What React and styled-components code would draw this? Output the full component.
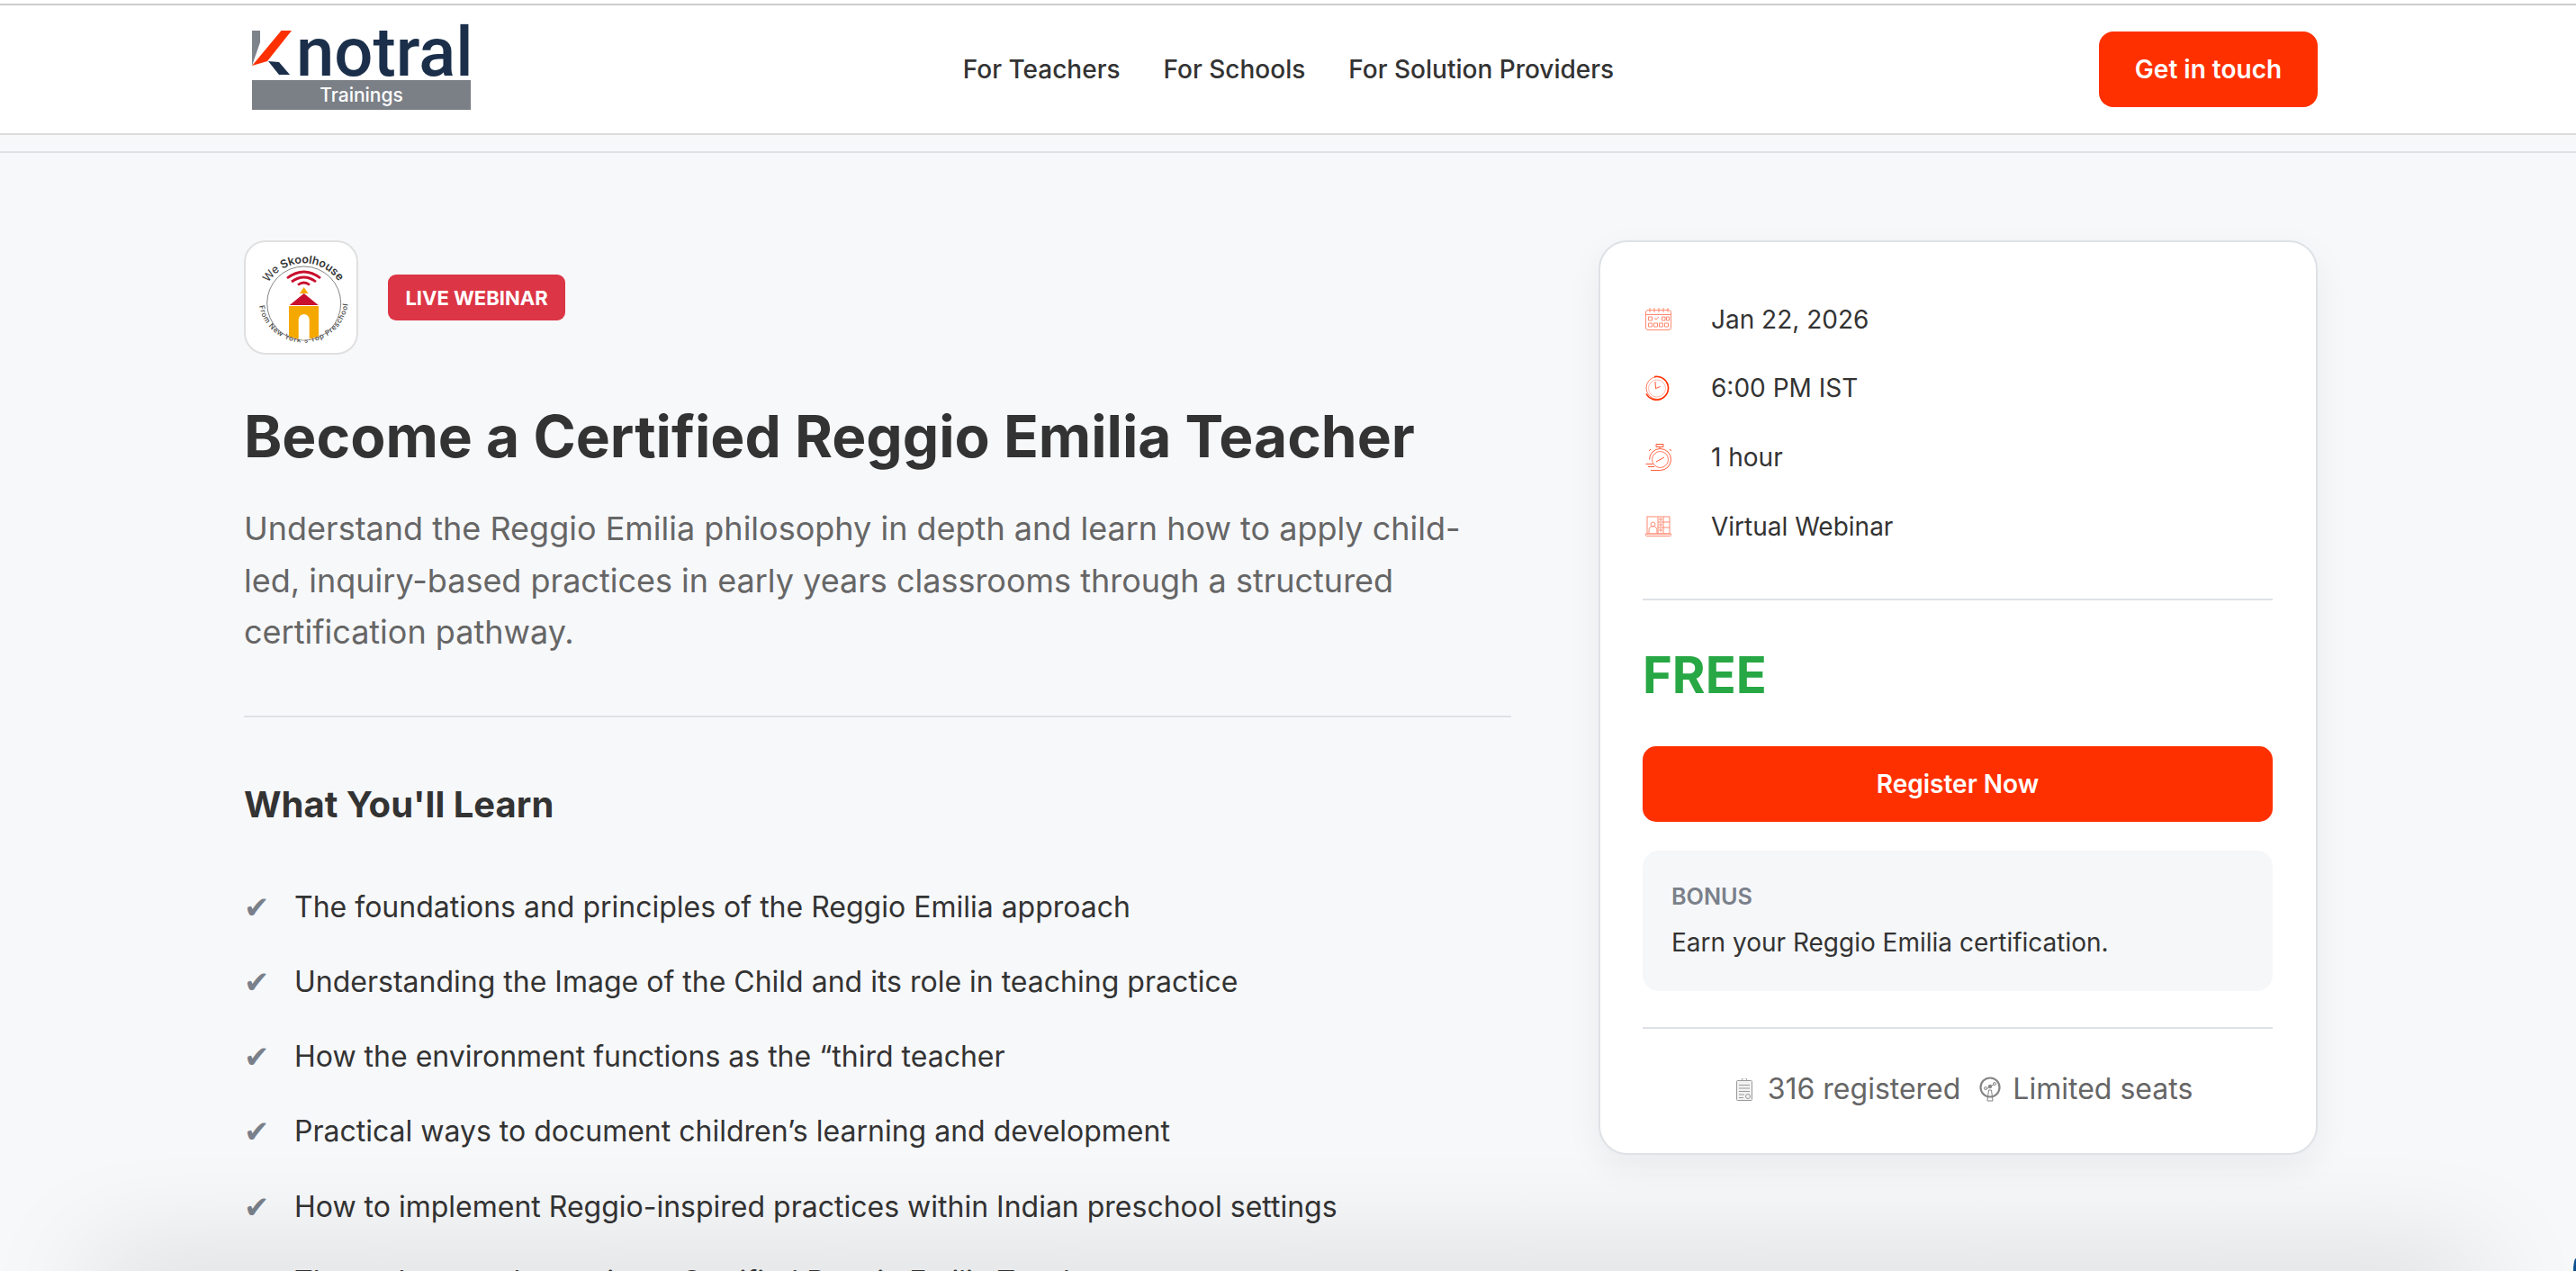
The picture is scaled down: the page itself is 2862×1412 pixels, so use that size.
import React from "react";
import styled, { createGlobalStyle } from "styled-components";

const GlobalStyle = createGlobalStyle`
  html, body {
    margin: 0;
    height: 100%;
    overflow: hidden;
    background: #f7f8fa;
    font-family: Inter, "Liberation Sans", sans-serif;
  }
  * {
    box-sizing: border-box;
  }
`;

const Page = styled.div`
  height: 1412px;
  overflow: hidden;
  color: #333;
`;

const TopBar = styled.header`
  background: #fff;
  padding-top: 4px;
`;

const TopBarInner = styled.div`
  height: 146px;
  border-top: 2px solid #cccccc;
  border-bottom: 2px solid #dcdcdc;
  padding: 0 287px 0 280px;
  display: flex;
  align-items: center;
  justify-content: space-between;
`;

const Logo = styled.div`
  width: 243px;
  margin: -2px 8px 0 0;
  display: flex;
  flex-direction: column;
`;

const LogoTop = styled.div`
  display: flex;
  align-items: flex-start;
  height: 54px;
`;

const LogoMark = styled.svg`
  flex-shrink: 0;
`;

const LogoWord = styled.span`
  font-family: Roboto, sans-serif;
  font-size: 76px;
  font-weight: 500;
  line-height: 56px;
  color: #1b2f4a;
  margin-left: 3px;
`;

const LogoBar = styled.div`
  height: 33px;
  background: #7b8087;
  color: #fff;
  font-size: 21px;
  font-weight: 500;
  line-height: 33px;
  text-align: center;
  margin-top: 5px;
`;

const Nav = styled.nav`
  display: flex;
  gap: 48px;
`;

const NavLink = styled.a`
  font-size: 28px;
  font-weight: 500;
  color: #333;
`;

const TouchButton = styled.button`
  width: 243px;
  height: 84px;
  border: 0;
  border-radius: 16px;
  background: #ff3000;
  color: #fff;
  font-family: inherit;
  font-size: 28px;
  font-weight: 600;
`;

const Main = styled.main`
  margin-top: 18px;
  border-top: 2px solid #dee2e6;
  padding: 97px 287px 0 271px;
  display: grid;
  grid-template-columns: 1408px 799px;
  gap: 97px;
  align-items: start;
`;

const Left = styled.div`
  display: flex;
  flex-direction: column;
`;

const ProviderRow = styled.div`
  display: flex;
  align-items: center;
  gap: 33px;
`;

const ProviderLogo = styled.div`
  width: 127px;
  height: 127px;
  border: 2px solid #e0e0e0;
  border-radius: 24px;
  background: #fff;
  overflow: hidden;
`;

const Badge = styled.span`
  width: 197px;
  height: 51px;
  border-radius: 9px;
  background: #dc3545;
  color: #fff;
  font-size: 22px;
  font-weight: 700;
  display: flex;
  align-items: center;
  justify-content: center;
`;

const Title = styled.h1`
  margin: 53px 0 0;
  font-size: 64px;
  line-height: 76px;
  font-weight: 700;
  color: #333;
`;

const Description = styled.p`
  margin: 36px 0 0;
  font-size: 36px;
  line-height: 57.6px;
  color: #666;
`;

const Rule = styled.hr`
  border: 0;
  height: 2px;
  margin: 0;
  background: #dee2e6;
`;

const LeftRule = styled(Rule)`
  margin-top: 63px;
`;

const SectionTitle = styled.h2`
  margin: 73px 0 0;
  font-size: 40px;
  line-height: 48px;
  font-weight: 700;
  color: #333;
`;

const LearnList = styled.ul`
  list-style: none;
  margin: 67px 0 0;
  padding: 0;
  display: flex;
  flex-direction: column;
  gap: 37.2px;
`;

const LearnItem = styled.li`
  display: flex;
  align-items: center;
  gap: 24px;
  font-size: 32px;
  line-height: 46px;
  color: #333;
`;

const Tick = styled.span`
  width: 32px;
  font-family: "DejaVu Sans", sans-serif;
  font-size: 34px;
  color: #7a808a;
`;

const Card = styled.aside`
  background: #fff;
  border: 2px solid #dee2e6;
  border-radius: 32px;
  padding: 64px 48px 0 47px;
  height: 1016px;
  box-shadow: 0 14px 40px rgba(0, 0, 0, 0.06);
`;

const Facts = styled.div`
  display: flex;
  flex-direction: column;
  gap: 33.8px;
  margin-bottom: 59px;
`;

const Fact = styled.div`
  display: flex;
  align-items: center;
  height: 43px;
  font-size: 28px;
  color: #333;
`;

const FactIcon = styled.span`
  width: 76px;
  padding-left: 3px;
  display: flex;
`;

const Price = styled.div`
  margin-top: 48px;
  font-size: 56px;
  line-height: 70px;
  font-weight: 700;
  color: #28a745;
`;

const RegisterButton = styled.button`
  display: block;
  width: 100%;
  height: 84px;
  margin-top: 44px;
  border: 0;
  border-radius: 15px;
  background: #ff3000;
  color: #fff;
  font-family: inherit;
  font-size: 28px;
  font-weight: 600;
`;

const BonusBox = styled.div`
  height: 156px;
  margin: 32px 0 40px;
  padding: 35px 32px 0;
  border-radius: 18px;
  background: #f6f7f9;
`;

const BonusLabel = styled.div`
  font-size: 25.2px;
  line-height: 32px;
  font-weight: 600;
  color: #7a808a;
`;

const BonusText = styled.div`
  margin-top: 15px;
  font-size: 28px;
  line-height: 40px;
  color: #333;
`;

const CardFooter = styled.div`
  margin-top: 43px;
  padding-left: 15px;
  display: flex;
  align-items: center;
  justify-content: center;
  font-size: 32px;
  line-height: 48px;
  color: #666;
`;

const FooterStat = styled.span`
  display: flex;
  align-items: center;
  gap: ${(p) => (p.$last ? "13px" : "17px")};
  margin-right: ${(p) => (p.$last ? "0" : "21px")};
`;

// shadow of the window lying over the bottom of the page
const WindowShadow = styled.div`
  position: fixed;
  left: 95px;
  right: 100px;
  bottom: -60px;
  height: 60px;
  border-radius: 30px;
  box-shadow: 0 -10px 120px rgba(0, 0, 0, 0.17);
  pointer-events: none;
`;

const CornerTip = styled.div`
  position: fixed;
  right: 0;
  bottom: 0;
  width: 3px;
  height: 14px;
  background: #0b4f8f;
  border-top-left-radius: 3px 14px;
`;

const KMark = () => (
  <LogoMark width="46" height="54" viewBox="0 0 46 54">
    <path d="M0 4h9v13L0 43z" fill="#7d838a" />
    <path d="M32.500 4H44L17 38 0 43z" fill="#ff3000" />
    <path d="M18 38l12 1 12 14H30z" fill="#1b2f4a" />
  </LogoMark>
);

const SkoolhouseLogo = () => (
  <svg width="123" height="123" viewBox="2 2 123 123">
    <defs>
      <path id="arcTop" d="M27 47a47 47 0 0 1 79 0" />
      <path id="arcBottom" d="M17 73a50 50 0 0 0 99 -6" />
    </defs>
    <text fontSize="12.500" fill="#333" fontFamily="Inter, sans-serif">
      <textPath href="#arcTop" textLength="92">
        We <tspan fontWeight="600">Skoolhouse</tspan>
      </textPath>
    </text>
    <text fontSize="8" fontWeight="500" fill="#444" fontFamily="Inter, sans-serif">
      <textPath href="#arcBottom" textLength="140">
        From New York's Top Preschool
      </textPath>
    </text>
    <circle cx="66.700" cy="70" r="41" fill="none" stroke="#666" strokeWidth="0.800" />
    <g fill="none" stroke="#c8102e" strokeWidth="2.800">
      <path d="M48 42q18.700-14 37 0" />
      <path d="M53 46q13.700-10 27 0" />
      <path d="M60 49.500q6.700-5 13 0" />
    </g>
    <path d="M50 73h33v33.500a41 41 0 0 1-33 0z" fill="#f5a800" />
    <path d="M60.700 110V88a6 6 0 0 1 12 0v22a41 41 0 0 1-12 0z" fill="#fff" />
    <path d="M66.700 59l16 13h-32z" fill="#c8102e" />
    <path d="M66.700 52l4.800 7h-9.600z" fill="#f5a800" />
  </svg>
);

const CalendarIcon = () => (
  <svg width="29" height="25" viewBox="0 0 29 25" fill="none" stroke="#ff8a73" strokeWidth="1">
    <rect x="0.500" y="2.500" width="28" height="22" rx="2.500" />
    <path d="M0.500 7.500h28M5 0v5M10 0v5M15 0v5M20 0v5M25 0v5" />
    <path d="M3.500 10h4v4h-4zM18.500 10h3.500v4h-3.500zM23.500 10h3v4h-3zM3.500 17h4v4h-4zM9.500 17h4v4h-4zM15.500 17h4v4h-4zM21.500 17h4v4h-4zM10 11l2 2 3-3" />
  </svg>
);

const ClockIcon = () => (
  <svg width="28" height="28" viewBox="0 0 28 28" fill="none" stroke="#ff3000">
    <circle cx="13.500" cy="14" r="12.500" strokeWidth="1" stroke="#ff7a5f" />
    <path d="M10 1.500a13 13 0 1 1-9 19" strokeWidth="1.500" />
    <circle cx="13" cy="14.500" r="9.500" strokeWidth="0.700" stroke="#ff9c87" />
    <path d="M11 7l0.500 7.500 5-2" strokeWidth="0.800" />
  </svg>
);

const StopwatchIcon = () => (
  <svg width="29" height="30" viewBox="0 0 29 30" fill="none" stroke="#ff5a38" strokeWidth="1">
    <path d="M12 0.500h8v3h-8zM16 3.500v2" />
    <path d="M6 29.500h10.500a12 12 0 1 0-12-12" />
    <circle cx="16.500" cy="17.500" r="9" strokeWidth="0.800" />
    <path d="M0.500 22.500h8M3 25.500h7M12 20l9-5M6 6l-2 2M27 6l2 2" />
  </svg>
);

const WebinarIcon = () => (
  <svg width="29" height="23" viewBox="0 0 29 23" fill="none" stroke="#ff8a73" strokeWidth="1">
    <rect x="2" y="1" width="25" height="19" />
    <path d="M0.500 20h28v1.500a1 1 0 0 1-1 1H1.500a1 1 0 0 1-1-1zM14 1v19M20 1v19M14 7h13M14 13h13" />
    <circle cx="8.500" cy="9.500" r="2.500" />
    <path d="M4 19v-3a4.500 4.500 0 0 1 9 0v3" />
    <circle cx="17" cy="4" r="1.200" />
    <circle cx="17" cy="10" r="1.200" />
    <circle cx="17" cy="16" r="1.200" />
  </svg>
);

const ClipboardIcon = () => (
  <svg width="18" height="25" viewBox="0 0 18 25" fill="#f2f2f2" stroke="#9a9a9a" strokeWidth="1">
    <rect x="0.500" y="2.500" width="17" height="22" rx="1" />
    <path d="M6 2.500a3 3 0 0 1 6 0M3 7.500h12M3 11h12M3 14.500h12M3 18h6M3 21.500h5" fill="none" />
    <circle cx="13" cy="20" r="2.500" />
  </svg>
);

const SeatsIcon = () => (
  <svg width="24" height="28" viewBox="0 0 24 28" fill="none" stroke="#858585">
    <circle cx="12" cy="12" r="10.500" strokeWidth="2.200" />
    <circle cx="12" cy="11" r="1.800" fill="#858585" />
    <circle cx="7" cy="13" r="1.500" strokeWidth="1" />
    <circle cx="17" cy="8" r="1.500" strokeWidth="1" />
    <path d="M9 27l1.500-12h3L15 27zM8 14l4-3 4-2" strokeWidth="1" />
  </svg>
);

const facts = [
  { icon: <CalendarIcon />, text: "Jan 22, 2026" },
  { icon: <ClockIcon />, text: "6:00 PM IST" },
  { icon: <StopwatchIcon />, text: "1 hour" },
  { icon: <WebinarIcon />, text: "Virtual Webinar" },
];

const learnings = [
  "The foundations and principles of the Reggio Emilia approach",
  "Understanding the Image of the Child and its role in teaching practice",
  "How the environment functions as the “third teacher",
  "Practical ways to document children’s learning and development",
  "How to implement Reggio-inspired practices within Indian preschool settings",
  "The pathway to becoming a Certified Reggio Emilia Teacher",
];

export default function App() {
  return (
    <Page>
      <GlobalStyle />
      <TopBar>
        <TopBarInner>
          <Logo>
            <LogoTop>
              <KMark />
              <LogoWord>notral</LogoWord>
            </LogoTop>
            <LogoBar>Trainings</LogoBar>
          </Logo>
          <Nav>
            <NavLink>For Teachers</NavLink>
            <NavLink>For Schools</NavLink>
            <NavLink>For Solution Providers</NavLink>
          </Nav>
          <TouchButton>Get in touch</TouchButton>
        </TopBarInner>
      </TopBar>
      <Main>
        <Left>
          <ProviderRow>
            <ProviderLogo>
              <SkoolhouseLogo />
            </ProviderLogo>
            <Badge>LIVE WEBINAR</Badge>
          </ProviderRow>
          <Title>Become a Certified Reggio Emilia Teacher</Title>
          <Description>
            Understand the Reggio Emilia philosophy in depth and learn how to apply child-led, inquiry-based practices
            in early years classrooms through a structured certification pathway.
          </Description>
          <LeftRule />
          <SectionTitle>What You'll Learn</SectionTitle>
          <LearnList>
            {learnings.map((item) => (
              <LearnItem key={item}>
                <Tick>✔</Tick>
                {item}
              </LearnItem>
            ))}
          </LearnList>
        </Left>
        <Card>
          <Facts>
            {facts.map((fact) => (
              <Fact key={fact.text}>
                <FactIcon>{fact.icon}</FactIcon>
                {fact.text}
              </Fact>
            ))}
          </Facts>
          <Rule />
          <Price>FREE</Price>
          <RegisterButton>Register Now</RegisterButton>
          <BonusBox>
            <BonusLabel>BONUS</BonusLabel>
            <BonusText>Earn your Reggio Emilia certification.</BonusText>
          </BonusBox>
          <Rule />
          <CardFooter>
            <FooterStat>
              <ClipboardIcon />
              316 registered
            </FooterStat>
            <FooterStat $last>
              <SeatsIcon />
              Limited seats
            </FooterStat>
          </CardFooter>
        </Card>
      </Main>
      <WindowShadow />
      <CornerTip />
    </Page>
  );
}
